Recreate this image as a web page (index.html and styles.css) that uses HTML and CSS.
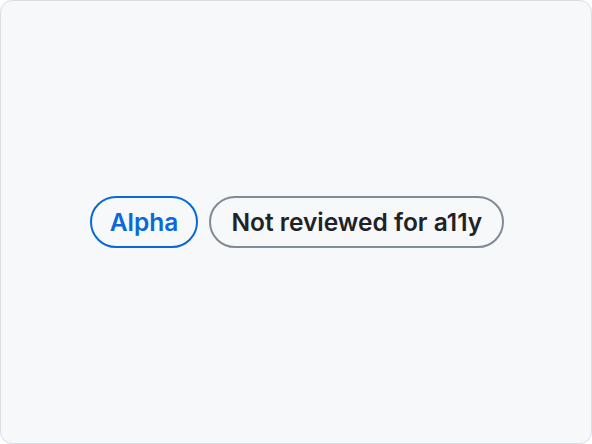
FILE: index.html
```html
<!DOCTYPE html>
<html>
<head>
<meta charset="utf-8">
<link rel="stylesheet" href="styles.css">
</head>
<body>
<div class="frame">
  <div class="labels">
    <span class="label label-accent">Alpha</span>
    <span class="label label-secondary">Not reviewed for a11y</span>
  </div>
</div>
</body>
</html>
```

FILE: styles.css
```css
html, body {
  margin: 0;
  padding: 0;
  background: #ffffff;
}
.frame {
  box-sizing: border-box;
  width: 592px;
  height: 444px;
  background: #f6f8fa;
  border: 1px solid #d8dee4;
  border-radius: 12px;
  display: flex;
  align-items: center;
  justify-content: center;
}
.labels {
  display: flex;
  gap: 11px;
  align-items: center;
  padding-left: 2px;
}
.label {
  box-sizing: border-box;
  height: 52px;
  padding: 0 18px;
  border: 2px solid;
  border-radius: 26px;
  display: inline-flex;
  align-items: center;
  font-family: Inter, "Liberation Sans", sans-serif;
  font-size: 24.5px;
  font-weight: 600;
  white-space: nowrap;
}
.label-accent {
  color: #0969da;
  border-color: #0969da;
}
.label-secondary {
  padding: 0 20px;
  color: #1f2328;
  border-color: #818b98;
}
```
